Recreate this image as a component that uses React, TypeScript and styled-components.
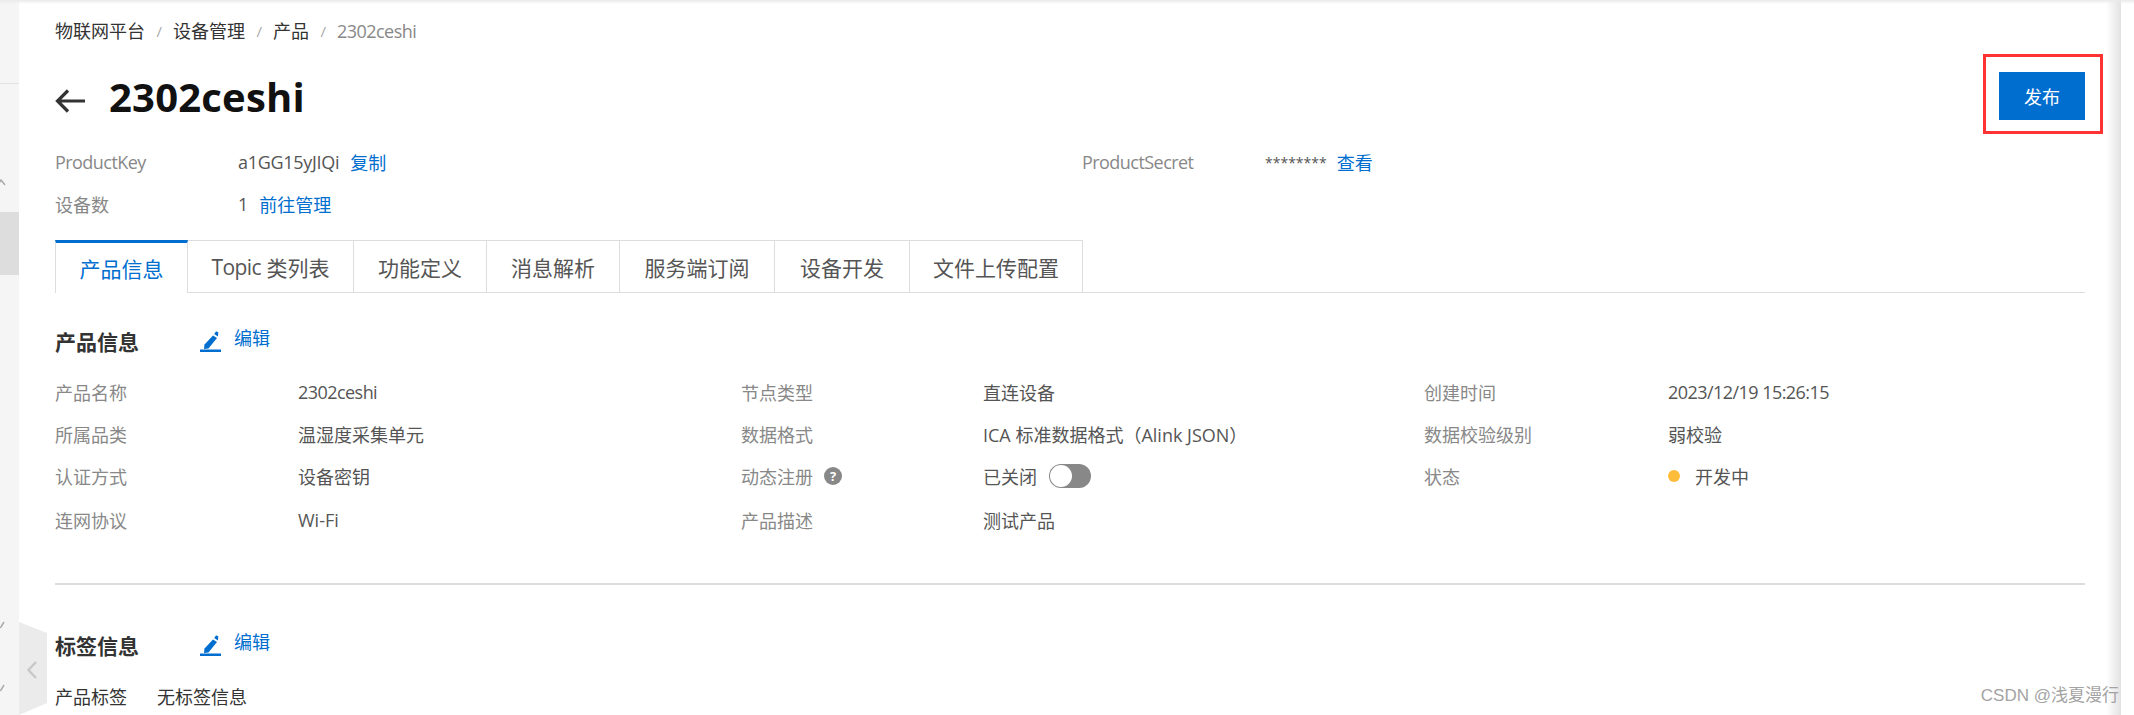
import React from "react";
import styled, { createGlobalStyle } from "styled-components";

const GlobalStyle = createGlobalStyle`
  html, body {
    margin: 0;
    padding: 0;
    background: #fff;
    overflow: hidden;
  }
  body {
    font-family: "Open Sans", "Noto Sans CJK SC", sans-serif;
    font-size: 18px;
    color: #333;
  }
`;

const Page = styled.div`
  display: flex;
  height: 715px;
  width: 2134px;
  overflow: hidden;
  position: relative;
`;

const TopShade = styled.div`
  position: absolute;
  top: 0;
  left: 0;
  right: 0;
  height: 4px;
  background: linear-gradient(#eaeaea, rgba(255, 255, 255, 0));
`;

const Rail = styled.aside`
  width: 19px;
  flex: none;
  background: #f5f5f5;
  display: flex;
  flex-direction: column;
`;

const RailHead = styled.div`
  height: 83px;
  border-bottom: 1px solid #e2e2e2;
`;

const RailItem = styled.div`
  height: 42px;
  margin-top: 86px;
  color: #aaa;
  overflow: hidden;
`;

const RailActive = styled.div`
  height: 63px;
  background: #ddd;
`;

const RailMark = styled.svg<{ $top: number }>`
  display: block;
  width: 6px;
  height: 10px;
  margin-top: ${({ $top }) => $top}px;
`;

const Collapse = styled.svg`
  position: absolute;
  left: 19px;
  top: 622px;
  width: 28px;
  height: 93px;
`;

const Main = styled.main`
  flex: none;
  width: 2087px;
  box-sizing: border-box;
  padding: 18px 21px 0 36px;
`;

const EdgeShade = styled.div`
  width: 15px;
  flex: none;
  background: linear-gradient(to right, #fff, #e2e2e2);
`;

const Crumbs = styled.nav`
  display: flex;
  align-items: center;
  height: 26px;
  line-height: 26px;
  color: #333;
`;

const Crumb = styled.span<{ $current?: boolean }>`
  color: ${({ $current }) => ($current ? "#888" : "#333")};
`;

const CrumbSep = styled.span`
  color: #aaa;
  margin: 0 11px 0 11.5px;
  font-size: 15px;
`;

// Latin runs sit a little tighter than Open Sans sets them by default
const Latin = styled.span<{ $spacing?: number }>`
  letter-spacing: ${({ $spacing }) => $spacing ?? -0.55}px;
`;

const TitleRow = styled.header`
  display: flex;
  align-items: center;
  justify-content: space-between;
  height: 48px;
  margin-top: 28px;
`;

const TitleGroup = styled.div`
  display: flex;
  align-items: center;
`;

const BackIcon = styled.svg`
  width: 31px;
  height: 24px;
  margin: 10px 23px 0 0;
`;

const Title = styled.h1`
  margin: 2px 0 0;
  font-size: 40px;
  line-height: 48px;
  font-weight: 700;
  letter-spacing: 0.2px;
  color: #111;
`;

const PublishWrap = styled.div`
  position: relative;
`;

const PublishButton = styled.button`
  display: block;
  width: 86px;
  height: 48px;
  border: 0;
  padding: 0;
  background: #006ecf;
  color: #fff;
  font: inherit;
`;

const RedFrame = styled.div`
  position: absolute;
  inset: -18px -18px -14px -16px;
  border: 3px solid #f33;
`;

const MetaGrid = styled.dl`
  display: grid;
  grid-template-columns: 183px 844px 183px 1fr;
  grid-auto-rows: 42px;
  align-items: center;
  margin: 21px 0 0;
`;

const MetaLabel = styled.dt`
  color: #888;
`;

const MetaValue = styled.dd`
  margin: 0;
  color: #555;
  display: flex;
  align-items: center;
  gap: 11px;
`;

const Mask = styled.span`
  font-size: 14px;
  margin-right: -1px;
`;

const Link = styled.a`
  color: #006ecf;
  text-decoration: none;
`;

const Tabs = styled.div`
  display: flex;
  height: 52px;
  margin-top: 15px;
  box-sizing: content-box;
  border-bottom: 1px solid #ddd;
`;

const Tab = styled.div<{ $active?: boolean; $width: number }>`
  width: ${({ $width }) => $width}px;
  box-sizing: border-box;
  display: flex;
  align-items: center;
  justify-content: center;
  white-space: pre;
  font-size: 21px;
  color: ${({ $active }) => ($active ? "#006ecf" : "#555")};
  background: #fff;
  border-top: ${({ $active }) => ($active ? "3px solid #006ecf" : "1px solid #ddd")};
  border-right: 1px solid #ddd;
  border-left: ${({ $active }) => ($active ? "1px solid #ddd" : "0")};
  height: ${({ $active }) => ($active ? "53px" : "52px")};
`;

const SectionHead = styled.div<{ $top: number }>`
  display: flex;
  align-items: center;
  height: 40px;
  margin-top: ${({ $top }) => $top}px;
`;

const SectionTitle = styled.h2`
  margin: -2px 0 0;
  width: 145px;
  font-size: 21px;
  font-weight: 700;
  color: #333;
`;

const EditLink = styled(Link)`
  display: flex;
  align-items: center;
  gap: 13px;
  margin-top: -10px;
`;

const EditIcon = styled.svg`
  width: 21px;
  height: 21px;
  margin-top: 8px;
`;

const DetailGrid = styled.dl`
  display: grid;
  grid-template-columns: 243px 443px 242px 441px 244px 1fr;
  grid-template-rows: 42px 42px 41px 47px;
  align-items: center;
  margin: 9px 0 0;
`;

const DetailLabel = styled.dt`
  color: #888;
  display: flex;
  align-items: center;
  gap: 11px;
`;

const DetailValue = styled.dd`
  margin: 0;
  color: #555;
  display: flex;
  align-items: center;
`;

const HelpDot = styled.span`
  width: 18px;
  height: 18px;
  border-radius: 50%;
  background: #888;
  color: #fff;
  font-size: 13px;
  font-weight: 700;
  line-height: 18px;
  text-align: center;
`;

const Toggle = styled.span`
  width: 42px;
  height: 24px;
  margin-left: 12px;
  box-sizing: border-box;
  border-radius: 12px;
  background: #888;
  padding: 1px;
`;

const ToggleKnob = styled.span`
  display: block;
  width: 22px;
  height: 22px;
  border-radius: 50%;
  background: #fff;
`;

const StatusDot = styled.span`
  width: 12px;
  height: 12px;
  border-radius: 50%;
  background: #fdbc3a;
  margin-right: 15px;
`;

const Divider = styled.hr`
  border: 0;
  height: 2px;
  background: #ddd;
  margin: 40px 0 0;
`;

const TagRow = styled.div`
  display: flex;
  gap: 30px;
  margin-top: 17px;
  color: #333;
`;

const Watermark = styled.div`
  position: absolute;
  right: 15px;
  top: 684px;
  font-family: "Liberation Sans", "Noto Sans CJK SC", sans-serif;
  font-size: 17px;
  line-height: 24px;
  color: #a3a3a3;
`;

const tabs = [
  { name: <>产品信息</>, width: 133 },
  {
    name: (
      <>
        <Latin>Topic</Latin> 类列表
      </>
    ),
    width: 166,
  },
  { name: <>功能定义</>, width: 133 },
  { name: <>消息解析</>, width: 133 },
  { name: <>服务端订阅</>, width: 155 },
  { name: <>设备开发</>, width: 135 },
  { name: <>文件上传配置</>, width: 173 },
];

const Pen: React.FC = () => (
  <EditIcon viewBox="0 0 21 21">
    <path d="M13 4.500 17 7 8.500 17.500 4 18l.5-4.500z" fill="#006ecf" />
    <path d="M14.200 3 16 .6c.7-.7 2.600.4 2.300 1.600L17.900 5.400z" fill="#006ecf" />
    <rect x="0" y="18.500" width="21" height="2.500" fill="#006ecf" />
  </EditIcon>
);

const App: React.FC = () => {
  return (
    <Page>
      <GlobalStyle />
      <Rail>
        <RailHead />
        <RailItem>
          <RailMark $top={9} viewBox="0 0 6 10">
            <path d="M-2 6 1 1 5 6" fill="none" stroke="#aaa" strokeWidth="1.500" />
          </RailMark>
        </RailItem>
        <RailActive />
        <RailMark $top={346} viewBox="0 0 6 10">
          <path d="M-2 8 1 6 4 1" fill="none" stroke="#aaa" strokeWidth="1.500" />
        </RailMark>
        <RailMark $top={53} viewBox="0 0 6 10">
          <path d="M-2 8 1 6 4 1" fill="none" stroke="#aaa" strokeWidth="1.500" />
        </RailMark>
      </Rail>
      <Collapse viewBox="0 0 28 93">
        <path d="M0 0 28 11V81L0 93Z" fill="#ebebeb" />
        <path d="M11 40 3.500 48 11 56" transform="translate(6 0)" fill="none" stroke="#c8c8c8" strokeWidth="2.500" />
      </Collapse>
      <Main>
        <Crumbs>
          <Crumb>物联网平台</Crumb>
          <CrumbSep>/</CrumbSep>
          <Crumb>设备管理</Crumb>
          <CrumbSep>/</CrumbSep>
          <Crumb>产品</Crumb>
          <CrumbSep>/</CrumbSep>
          <Crumb $current>
            <Latin>2302ceshi</Latin>
          </Crumb>
        </Crumbs>

        <TitleRow>
          <TitleGroup>
            <BackIcon viewBox="0 0 31 24">
              <path d="M30 12H3M13 1.500 2.500 12 13 22.500" fill="none" stroke="#333" strokeWidth="3.200" />
            </BackIcon>
            <Title>2302ceshi</Title>
          </TitleGroup>
          <PublishWrap>
            <PublishButton>发布</PublishButton>
            <RedFrame />
          </PublishWrap>
        </TitleRow>

        <MetaGrid>
          <MetaLabel>
            <Latin>ProductKey</Latin>
          </MetaLabel>
          <MetaValue>
            <Latin $spacing={-0.3}>a1GG15yJIQi</Latin>
            <Link>复制</Link>
          </MetaValue>
          <MetaLabel>
            <Latin>ProductSecret</Latin>
          </MetaLabel>
          <MetaValue>
            <Mask>********</Mask>
            <Link>查看</Link>
          </MetaValue>
          <MetaLabel>设备数</MetaLabel>
          <MetaValue>
            1 <Link>前往管理</Link>
          </MetaValue>
        </MetaGrid>

        <Tabs>
          {tabs.map((tab, i) => (
            <Tab key={i} $active={i === 0} $width={tab.width}>
              {tab.name}
            </Tab>
          ))}
        </Tabs>

        <SectionHead $top={29}>
          <SectionTitle>产品信息</SectionTitle>
          <EditLink>
            <Pen />
            编辑
          </EditLink>
        </SectionHead>

        <DetailGrid>
          <DetailLabel>产品名称</DetailLabel>
          <DetailValue>
            <Latin>2302ceshi</Latin>
          </DetailValue>
          <DetailLabel>节点类型</DetailLabel>
          <DetailValue>直连设备</DetailValue>
          <DetailLabel>创建时间</DetailLabel>
          <DetailValue>
            <Latin>2023/12/19 15:26:15</Latin>
          </DetailValue>

          <DetailLabel>所属品类</DetailLabel>
          <DetailValue>温湿度采集单元</DetailValue>
          <DetailLabel>数据格式</DetailLabel>
          <DetailValue>ICA 标准数据格式（Alink JSON）</DetailValue>
          <DetailLabel>数据校验级别</DetailLabel>
          <DetailValue>弱校验</DetailValue>

          <DetailLabel>认证方式</DetailLabel>
          <DetailValue>设备密钥</DetailValue>
          <DetailLabel>
            动态注册 <HelpDot>?</HelpDot>
          </DetailLabel>
          <DetailValue>
            已关闭
            <Toggle>
              <ToggleKnob />
            </Toggle>
          </DetailValue>
          <DetailLabel>状态</DetailLabel>
          <DetailValue>
            <StatusDot />
            开发中
          </DetailValue>

          <DetailLabel>连网协议</DetailLabel>
          <DetailValue>Wi-Fi</DetailValue>
          <DetailLabel>产品描述</DetailLabel>
          <DetailValue>测试产品</DetailValue>
        </DetailGrid>

        <Divider />

        <SectionHead $top={41}>
          <SectionTitle>标签信息</SectionTitle>
          <EditLink>
            <Pen />
            编辑
          </EditLink>
        </SectionHead>

        <TagRow>
          <span>产品标签</span>
          <span>无标签信息</span>
        </TagRow>
      </Main>
      <EdgeShade />
      <TopShade />
      <Watermark>CSDN @浅夏漫行</Watermark>
    </Page>
  );
};

export default App;
